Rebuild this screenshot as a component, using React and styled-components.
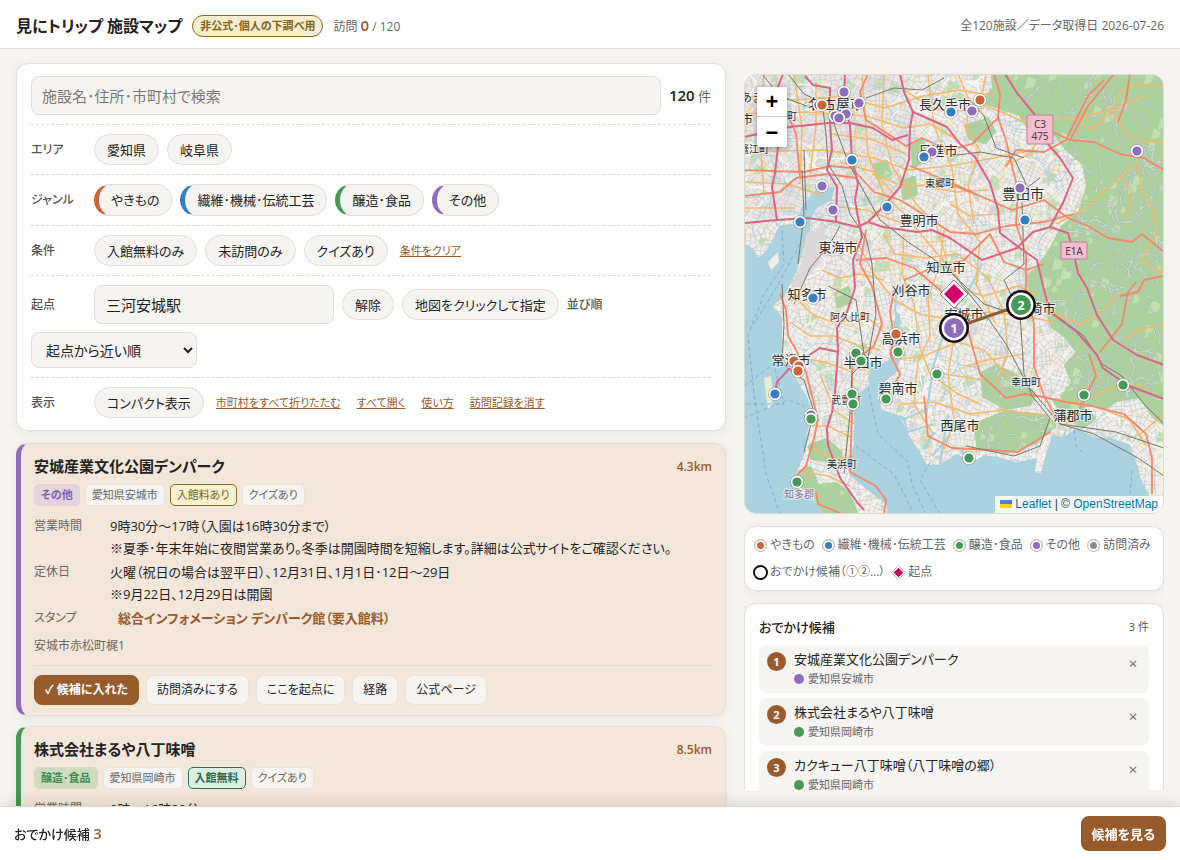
import React, { useState } from 'react';
import styled, { createGlobalStyle, css } from 'styled-components';

const COLORS = {
  pottery: '#c8633a',
  textile: '#3a7dc0',
  food: '#459856',
  other: '#8d6cbb',
  visited: '#8f8f86',
};

const GENRES = [
  { id: 'pottery', name: 'やきもの' },
  { id: 'textile', name: '繊維･機械･伝統工芸' },
  { id: 'food', name: '醸造･食品' },
  { id: 'other', name: 'その他' },
];

const FACILITIES = [
  {
    name: '安城産業文化公園デンパーク',
    genre: 'other',
    genreName: 'その他',
    city: '愛知県安城市',
    free: false,
    distance: '4.3km',
    hours: ['9時30分～17時（入園は16時30分まで）', '※夏季･年末年始に夜間営業あり。冬季は開園時間を短縮します。詳細は公式サイトをご確認ください。'],
    closed: ['火曜（祝日の場合は翌平日）、12月31日、1月1日･12日～29日', '※9月22日、12月29日は開園'],
    stamp: '総合インフォメーション デンパーク館（要入館料）',
    address: '安城市赤松町梶1',
  },
  {
    name: '株式会社まるや八丁味噌',
    genre: 'food',
    genreName: '醸造･食品',
    city: '愛知県岡崎市',
    free: true,
    distance: '8.5km',
    hours: ['9時～16時20分'],
    closed: ['年末年始'],
    stamp: '受付',
    address: '岡崎市八丁町52',
  },
];

const CANDIDATES = [
  { name: '安城産業文化公園デンパーク', city: '愛知県安城市', genre: 'other' },
  { name: '株式会社まるや八丁味噌', city: '愛知県岡崎市', genre: 'food' },
  { name: 'カクキュー八丁味噌（八丁味噌の郷）', city: '愛知県岡崎市', genre: 'food' },
];

/* ---------- map data ---------- */

const WATER = [
  'M0 170L8 174 14 184 22 178 36 152 52 150 60 130 72 116 90 113 87 126 72 134 66 146 66 156 60 172 52 198 48 206 40 222 28 232 34 238 38 246 37 272 41 286 48 296 52 306 62 322 68 338 66 348 62 360 61 378 51 401 54 418 66 422 73 430 78 440 0 440Z',
  'M145 440L142 429 124 416 106 401 105 388 110 371 111 344 107 326 120 316 126 311 124 304 130 294 146 286 149 262 152 240 156 240 153 262 156 284 152 298 140 308 133 324 138 336 156 344 166 364 183 391 196 391 213 380 226 389 240 382 253 383 273 389 293 384 290 398 297 400 303 378 309 361 321 364 333 354 349 364 366 364 386 371 392 390 396 404 404 420 409 440Z',
];

const FORESTS = [
  'M249 0L420 0 420 350 408 340 396 322 372 326 360 334 344 330 330 336 318 322 330 310 322 292 334 278 322 262 308 252 302 232 288 222 284 204 300 186 310 170 318 154 336 138 344 112 340 90 322 74 312 60 288 58 276 40 258 34 240 28 250 14Z',
  'M238 300L252 292 272 302 290 320 286 330 262 334 240 322Z',
  'M232 350L262 338 300 342 310 352 292 368 262 378 234 372Z',
  'M66 372L82 366 96 378 96 392 82 386 68 384Z',
  'M56 398L66 394 74 412 92 410 104 420 112 438 80 438 70 420 58 412Z',
  'M310 326L334 330 350 344 340 352 322 344Z',
  'M222 52L244 46 250 58 240 68 226 64Z',
  'M168 72L178 66 182 84 170 92Z',
  'M130 92L142 88 146 100 134 104Z',
  'M158 108L170 104 172 120 160 124Z',
  'M92 220L104 214 106 228 94 232Z',
  'M186 434L196 430 206 440 186 440Z',
];

const MOTORWAYS = [
  'M0 149L33 146 63 144 93 148 113 153 124 148 139 153 173 158 188 156 206 164 238 186 273 174 289 158 306 153 324 159 329 176 334 199 343 214 353 241 369 266 393 281 420 291',
  'M261 0L273 19 291 41 303 69 316 84 329 104 319 129 306 153',
  'M156 0L160 18 169 38 203 53 216 70 231 83 246 109 254 136 256 159 276 174 293 186 299 212 306 238 333 258 353 281 359 294 383 311 420 325',
  'M169 38L166 53 165 86 156 113 139 133 124 148',
  'M0 63L46 53 84 49 106 49 129 54 148 66 164 61',
  'M39 0L28 28 34 73 31 99 28 113 33 146',
  'M61 2L69 11 86 14 86 49 88 76 83 96 93 113 92 148',
  'M101 0L100 20 106 52 108 86 114 109 111 126 114 143 118 163 109 186 111 214 103 238 93 254 94 278 91 318 88 338 83 354 84 371 96 404 113 428 120 436',
  'M94 278L76 274 46 294 33 308 31 319',
];

const TRUNKS = [
  'M0 96L60 98 86 92 108 94 130 118 156 126 182 142 206 158 232 160 262 152 300 148 330 140',
  'M0 122L36 118 52 104 84 100 112 104',
  'M36 220L42 236 44 262 52 276 62 298 68 322 74 346 70 364 62 392 52 402',
  'M124 0L116 18 122 46 144 60 162 72 178 64 204 76 228 70 254 44 256 20 250 0',
  'M150 216L146 238 150 264 146 280 156 300 150 312',
  'M254 44L262 66 268 92 274 116 272 150 282 180 282 214 290 250 290 292 300 322 316 350',
  'M206 110L236 122 268 136 300 126 324 144 344 152 364 164 388 168 398 160 420 178',
  'M300 54L326 66 350 68 376 80 400 84 420 96',
  'M166 92L206 108 232 120',
  'M112 186L142 184 170 194 196 216 220 242 236 300 262 324 280 320 294 322 322 328 348 332 380 340 402 360 408 384 408 420',
  'M180 322L184 362 208 374 246 376 274 378 306 358',
  'M122 156L116 190 128 212 138 250 130 272 108 288 108 340 106 398',
  'M106 398L132 412 142 426 140 440',
  'M345 280L352 302 336 334M370 0L344 32 326 66',
  'M386 0L382 26 374 48M356 278L378 250 384 218 392 208',
  'M72 418L74 430 98 440M36 22L52 60 56 104',
  'M262 92L272 76 300 78 322 66 344 22 360 6',
  'M300 190L282 196 260 188 246 160 220 186 188 194 160 206',
  'M420 202L400 206 394 218 376 222',
];

const SECONDARIES = [
  'M0 22L50 26 100 22 140 34 180 22 216 16 250 22',
  'M0 40L60 38 122 42 160 54 186 50 214 66',
  'M0 78L80 76 130 84 164 96 206 92 250 84 290 76',
  'M20 0L16 60 20 120M50 0L58 54 56 110M72 8L72 52 66 100',
  'M118 0L124 80 140 120 162 142 190 176 216 206',
  'M140 0L138 50 148 92 172 130 192 150 204 190',
  'M184 0L190 52 208 94 214 140 236 168 232 210 252 250',
  'M214 0L226 28 222 54 236 76 224 112 230 150',
  'M242 0L236 30 262 40 280 48 330 44 368 36 378 16 394 10 420 12',
  'M368 36L386 64 410 68 420 70M393 88L366 112 342 134 312 150',
  'M393 88L398 116 410 138 412 160 398 186 420 200',
  'M378 100L388 122 382 146M280 48L296 62 286 80 260 92',
  'M334 44L348 56 368 36 400 22',
  'M112 166L130 200 150 226 176 240 206 246 244 238 280 242 310 248',
  'M140 160L150 180 182 184 214 180 244 204 260 238 264 280 252 310',
  'M160 160L158 200 170 230 176 274 186 300 214 320 236 330',
  'M200 156L196 190 184 224 186 262 174 288 170 330 188 358',
  'M150 286L180 282 214 268 240 276 262 300 290 308',
  'M54 226L70 242 90 248 124 244 140 258',
  'M46 248L66 262 90 262 116 272 136 276',
  'M56 284L80 288 104 296 126 294M76 300L90 336 110 350',
  'M68 352L84 352 108 364M70 374L86 384 106 384M60 398L84 402 106 412',
  'M210 264L204 300 210 346 200 376M156 330L190 328 226 340 260 336 304 342',
  'M306 238L336 250 354 240 378 218M382 264L400 254 420 252',
  'M322 330L350 322 372 312 400 312M352 332L386 346 402 372M420 340L394 362',
  'M160 16L186 32 206 38 240 34M128 100L154 110 180 112 212 118 244 116',
  'M338 440L350 430M78 196L96 204 116 200 140 206',
  'M0 108L44 110 80 122M0 134L50 134M88 60L130 66 162 80M96 88L130 98 150 120M86 132L122 136 160 150',
  'M214 214L240 222 274 212 296 222M206 130L226 142 250 140M222 292L244 286 280 280M200 300L240 306',
];

const RAILS = [
  'M44 0L60 20 78 28 82 60 84 90 98 112 106 140 122 164 128 190 132 240 124 284 108 300 106 340 100 400',
  'M90 50L104 88 118 114 136 146 164 168 206 196 238 236 262 270 284 312 316 350 372 358 420 374',
  'M204 196L240 230 276 242M278 128L280 190 260 206 276 240 280 300 288 322 306 344 296 372 270 382 222 372',
  'M206 82L236 78 270 84 282 110 272 122 296 104',
  'M18 0L36 22 68 34M58 96L60 140 54 190M62 136L60 76',
  'M310 240L340 262 358 290 378 302 400 330 420 350',
  'M38 210L40 250 38 290 60 306 70 338 60 378',
  'M96 152L86 170 66 194 50 230M84 212L112 226 120 280 132 290',
  'M122 24L150 14 178 16 200 4M226 26L240 42 252 74 280 84',
  'M316 350L350 360 394 384 420 402',
];

const FERRIES = [
  'M38 156L40 190 20 220 4 262 10 320 22 400 36 440',
  'M0 312L30 290 40 330 0 330',
  'M0 344L44 326 60 332M124 314L134 360 164 388 168 410 182 440',
  'M112 372L150 400 170 440M186 388L176 406 196 440M56 170L32 214 10 250',
  'M330 356L332 372 340 380M388 396L386 420',
];

const PLACES = [
  ['名古屋市', 92, 35, 14],
  ['長久手市', 201, 35, 13],
  ['日進市', 194, 81, 13],
  ['東郷町', 196, 113, 10],
  ['豊明市', 175, 151, 13],
  ['豊田市', 279, 125, 14],
  ['東海市', 94, 178, 13],
  ['知立市', 202, 198, 13],
  ['刈谷市', 167, 221, 13],
  ['安城市', 220, 245, 13],
  ['岡崎市', 292, 239, 13],
  ['知多市', 63, 225, 13],
  ['阿久比町', 106, 247, 10],
  ['高浜市', 157, 269, 13],
  ['常滑市', 47, 291, 13],
  ['半田市', 119, 293, 13],
  ['碧南市', 154, 319, 13],
  ['武豊町', 102, 330, 10],
  ['美浜町', 98, 394, 10],
  ['西尾市', 216, 356, 13],
  ['幸田町', 282, 312, 10],
  ['蒲郡市', 329, 346, 13],
  ['蟹江町', 10, 79, 10],
  ['あま市', 14, 28, 12],
  ['津島市', -9, 50, 12],
  ['大治町', 38, 46, 10],
];

const PINS = [
  ['other', 100, 18], ['other', 115, 29], ['other', 91, 42], ['other', 102, 40], ['other', 95, 44],
  ['other', 78, 112], ['other', 89, 136], ['other', 188, 78], ['other', 228, 37], ['other', 276, 114],
  ['other', 393, 77], ['other', 67, 341],
  ['textile', 75, 31], ['textile', 207, 38], ['textile', 108, 86], ['textile', 180, 83],
  ['textile', 143, 133], ['textile', 56, 148], ['textile', 281, 146], ['textile', 69, 224], ['textile', 31, 320],
  ['pottery', 78, 31], ['pottery', 236, 26], ['pottery', 152, 260], ['pottery', 50, 287],
  ['pottery', 55, 292], ['pottery', 54, 297],
  ['food', 112, 279], ['food', 117, 287], ['food', 154, 278], ['food', 193, 300], ['food', 142, 325],
  ['food', 108, 320], ['food', 109, 330], ['food', 67, 345], ['food', 53, 408], ['food', 225, 384],
  ['food', 340, 321], ['food', 379, 311],
];

// small seeded generator so that the side streets are the same on every render
const createRandom = seed => () => {
  seed = (seed * 16807) % 2147483647;
  return seed / 2147483647;
};

const buildStreets = () => {
  const rnd = createRandom(4211);
  let path = '';
  for (let y = 0; y < 440; y += 15) {
    for (let x = 0; x < 420; x += 15) {
      const angle = rnd() * 1.2 - 0.3;
      const c = Math.cos(angle);
      const s = Math.sin(angle);
      for (let k = -1; k <= 1; k++) {
        const o = k * 5 + rnd() * 3;
        const l = 5 + rnd() * 6;
        path += `M${(x - c * l - s * o).toFixed(1)} ${(y - s * l + c * o).toFixed(1)}L${(x + c * l - s * o).toFixed(1)} ${(y + s * l + c * o).toFixed(1)}`;
        path += `M${(x + s * l + c * o).toFixed(1)} ${(y - c * l + s * o).toFixed(1)}L${(x - s * l + c * o).toFixed(1)} ${(y + c * l + s * o).toFixed(1)}`;
      }
    }
  }
  return path;
};

const buildTrails = (count, seed, minX) => {
  const rnd = createRandom(seed);
  let path = '';
  for (let i = 0; i < count; i++) {
    let x = minX + rnd() * (430 - minX);
    let y = rnd() * 440;
    let angle = rnd() * 6.28;
    path += `M${x.toFixed(1)} ${y.toFixed(1)}`;
    for (let k = 0; k < 9; k++) {
      angle += (rnd() - 0.5) * 1.8;
      x += Math.cos(angle) * 5;
      y += Math.sin(angle) * 5;
      path += `L${x.toFixed(1)} ${y.toFixed(1)}`;
    }
  }
  return path;
};

const buildPatches = (count, seed) => {
  const rnd = createRandom(seed);
  return Array.from({ length: count }, () => {
    const x = rnd() * 420;
    const y = rnd() * 440;
    const r = 2 + rnd() * 5;
    return `M${x.toFixed(1)} ${(y - r).toFixed(1)}l${(r * 1.2).toFixed(1)} ${(r * 0.6).toFixed(1)} ${(-r * 0.3).toFixed(1)} ${r.toFixed(1)} ${(-r * 1.4).toFixed(1)} ${(r * 0.3).toFixed(1)}z`;
  }).join('');
};

const STREETS = buildStreets();
const TRAILS = buildTrails(210, 917, 235);
const STREAMS = buildTrails(150, 5531, 0);
const LANES = buildTrails(140, 3307, 0);
const BYWAYS = buildTrails(70, 8123, 0);
const PARKS = buildPatches(260, 77);
const FIELDS = buildPatches(320, 1290);
const BLOCKS = buildPatches(160, 641);

const MapDrawing = () => (
  <MapSvg viewBox="1 1 418 438" preserveAspectRatio="xMidYMid slice" role="img" aria-label="施設の地図">
    <defs>
      <clipPath id="woods">
        {FORESTS.map(d => <path key={d} d={d} />)}
      </clipPath>
    </defs>
    <rect width="420" height="440" fill="#f3f0e9" />
    <path d="M0 0H160L176 60 150 130 110 160 60 140 0 146Z" fill="#ebe7e3" />
    <path d={FIELDS} fill="#eaf0d0" />
    <path d={BLOCKS} fill="#e0dcda" />
    <path d={PARKS} fill="#c6e2b2" />
    <path d={STREETS} stroke="#c3c4ce" strokeWidth="0.6" fill="none" />
    <path d={LANES} stroke="#fdfdfd" strokeWidth="1.1" fill="none" />
    <path d={STREAMS} stroke="#9fcde0" strokeWidth="0.8" fill="none" />
    <path d={BYWAYS} stroke="#f6cf9c" strokeWidth="1" fill="none" />
    {FORESTS.map(d => <path key={d} d={d} fill="#add19e" stroke="#add19e" strokeLinejoin="round" strokeWidth="4" />)}
    <g clipPath="url(#woods)" fill="none">
      <path d={PARKS} fill="#c5e0b0" />
      <path d={TRAILS} stroke="#9fb3a8" strokeWidth="1.7" />
      <path d={TRAILS} stroke="#dbe5d8" strokeWidth="0.8" />
    </g>
    {WATER.map(d => <path key={d} d={d} fill="#aad3df" stroke="#9cc4d2" strokeWidth="0.5" />)}
    <path d="M62 160L78 152 84 170 74 190 56 212 46 214 58 188Z" fill="#dcd8d8" />
    <path d="M24 188L34 178 35 188 27 196Z" fill="#f2efe4" />
    <path d="M20 304L27 302 29 320 27 334 24 334 22 320Z" fill="#e9ecd0" />
    <path d="M153 216L151 236 157 250M238 190L226 214 206 240 190 290 182 340M190 358L180 376M204 340L196 390" stroke="#aad3df" strokeWidth="2.4" fill="none" />
    <path d="M142 338L160 344 164 362 176 380M158 346L182 336M164 358L190 350M188 382L206 362" stroke="#aad3df" strokeWidth="2" fill="none" />
    <g fill="none" stroke="#7b9fd0" strokeWidth="0.8" strokeDasharray="4 3">
      {FERRIES.map(d => <path key={d} d={d} />)}
    </g>
    <g fill="none" strokeLinejoin="round">
      {SECONDARIES.map(d => <path key={d} d={d} stroke="#f5b969" strokeWidth="1.5" />)}
      {TRUNKS.map(d => <path key={d} d={d} stroke="#f5876a" strokeWidth="1.8" />)}
      {RAILS.map(d => <path key={d} d={d} stroke="#77756f" strokeWidth="1" />)}
      {MOTORWAYS.map(d => <path key={d} d={d} stroke="#dc6484" strokeWidth="2" />)}
    </g>
    <rect x="283" y="41" width="26" height="29" rx="1" fill="#efc0cf" stroke="#c97b93" />
    <rect x="317" y="168" width="26" height="17" rx="1" fill="#efc0cf" stroke="#c97b93" />
    <ShieldText x="296" y="54">C3</ShieldText>
    <ShieldText x="296" y="66">475</ShieldText>
    <ShieldText x="330" y="181">E1A</ShieldText>
    {PLACES.map(([name, x, y, size]) => (
      <PlaceText key={name} x={x} y={y} fontSize={size}>{name}</PlaceText>
    ))}
    <PlaceText x="55" y="424" fontSize="10" $district>知多郡</PlaceText>
    <path d="M210 254L277 231" stroke="#8a5a3a" strokeWidth="3" />
    {PINS.map(([genre, x, y]) => (
      <g key={`${x}-${y}`}>
        <circle cx={x} cy={y} r="6.8" fill="#6f6a70" opacity="0.55" />
        <circle cx={x} cy={y} r="6.2" fill="#fff" />
        <circle cx={x} cy={y} r="4.6" fill={COLORS[genre]} />
      </g>
    ))}
    <path d="M210 206L224 220 210 234 196 220Z" fill="#fff" stroke="#8b8088" />
    <path d="M210 210L220 220 210 230 200 220Z" fill="#d6006c" />
    {[['1', 210, 254, COLORS.other], ['2', 277, 231, COLORS.food]].map(([n, x, y, fill]) => (
      <g key={n}>
        <circle cx={x} cy={y} r="15" fill="#111" />
        <circle cx={x} cy={y} r="12.4" fill="#fff" />
        <circle cx={x} cy={y} r="10" fill={fill} />
        <PinNumber x={x} y={y + 5}>{n}</PinNumber>
      </g>
    ))}
  </MapSvg>
);

const FacilityCard = ({ data, defaultPicked }) => {
  const [picked, setPicked] = useState(defaultPicked);

  return (
    <Facility $color={COLORS[data.genre]}>
      <FacilityHead>
        <FacilityName>{data.name}</FacilityName>
        <Distance>{data.distance}</Distance>
      </FacilityHead>
      <Tags>
        <Tag $genre={data.genre}>{data.genreName}</Tag>
        <Tag>{data.city}</Tag>
        <Tag $fee={data.free ? 'free' : 'paid'}>{data.free ? '入館無料' : '入館料あり'}</Tag>
        <Tag>クイズあり</Tag>
      </Tags>
      <Details>
        <dt>営業時間</dt>
        <dd>{data.hours.map(line => <div key={line}>{line}</div>)}</dd>
        <dt>定休日</dt>
        <dd>{data.closed.map(line => <div key={line}>{line}</div>)}</dd>
        <dt>スタンプ</dt>
        <Stamp>{data.stamp}</Stamp>
      </Details>
      <Address>{data.address}</Address>
      <Actions>
        <ActionButton type="button" $primary={picked} onClick={() => setPicked(!picked)}>
          {picked ? '✓ 候補に入れた' : '候補に入れる'}
        </ActionButton>
        <ActionButton type="button">訪問済みにする</ActionButton>
        <ActionButton type="button">ここを起点に</ActionButton>
        <ActionButton as="a" href="#route">経路</ActionButton>
        <ActionButton as="a" href="#official">公式ページ</ActionButton>
      </Actions>
    </Facility>
  );
};

const App = () => (
  <>
    <GlobalStyle />
    <Header>
      <Title>見にトリップ 施設マップ</Title>
      <Badge>非公式･個人の下調べ用</Badge>
      <Visits>訪問 <strong>0</strong> / 120</Visits>
      <Source>全120施設／データ取得日 2026-07-26</Source>
    </Header>

    <Layout>
      <main>
        <Filters>
          <SearchRow>
            <SearchInput type="search" aria-label="施設を検索" placeholder="施設名･住所･市町村で検索" />
            <Count><strong>120</strong> 件</Count>
          </SearchRow>
          <FilterRow>
            <RowLabel>エリア</RowLabel>
            <Pill type="button">愛知県</Pill>
            <Pill type="button">岐阜県</Pill>
          </FilterRow>
          <FilterRow>
            <RowLabel>ジャンル</RowLabel>
            {GENRES.map(({ id, name }) => (
              <Pill key={id} type="button" $color={COLORS[id]}>{name}</Pill>
            ))}
          </FilterRow>
          <FilterRow>
            <RowLabel>条件</RowLabel>
            <Pill type="button">入館無料のみ</Pill>
            <Pill type="button">未訪問のみ</Pill>
            <Pill type="button">クイズあり</Pill>
            <TextButton type="button">条件をクリア</TextButton>
          </FilterRow>
          <FilterRow>
            <RowLabel as="label" htmlFor="origin">起点</RowLabel>
            <OriginInput id="origin" type="text" defaultValue="三河安城駅" />
            <Pill type="button">解除</Pill>
            <Pill type="button">地図をクリックして指定</Pill>
            <RowLabel as="label" htmlFor="sort">並び順</RowLabel>
            <SortSelect id="sort" defaultValue="near">
              <option value="near">起点から近い順</option>
              <option value="city">市町村順</option>
            </SortSelect>
          </FilterRow>
          <FilterRow>
            <RowLabel>表示</RowLabel>
            <Pill type="button">コンパクト表示</Pill>
            <TextButton type="button">市町村をすべて折りたたむ</TextButton>
            <TextButton type="button">すべて開く</TextButton>
            <TextButton type="button">使い方</TextButton>
            <TextButton type="button">訪問記録を消す</TextButton>
          </FilterRow>
        </Filters>

        <FacilityList>
          {FACILITIES.map(data => <FacilityCard key={data.name} data={data} defaultPicked />)}
        </FacilityList>
      </main>

      <Side>
        <MapPanel>
          <MapDrawing />
          <ZoomControl>
            <ZoomButton type="button" aria-label="拡大">+</ZoomButton>
            <ZoomButton type="button" aria-label="縮小">−</ZoomButton>
          </ZoomControl>
          <Attribution>
            <svg width="12" height="8" viewBox="0 0 12 8" aria-hidden="true">
              <path fill="#4c7be1" d="M0 0h12v4H0z" />
              <path fill="#ffd500" d="M0 4h12v4H0z" />
            </svg>{' '}
            <a href="#leaflet">Leaflet</a> | © <a href="#osm">OpenStreetMap</a>
          </Attribution>
        </MapPanel>

        <Legend>
          {GENRES.map(({ id, name }) => (
            <li key={id}><LegendDot $color={COLORS[id]} />{name}</li>
          ))}
          <li><LegendDot $color={COLORS.visited} />訪問済み</li>
          <li><LegendRing />おでかけ候補（①②…）</li>
          <li>
            <svg width="15" height="15" viewBox="0 0 15 15" aria-hidden="true">
              <path d="M7.5 .5L14.5 7.5 7.5 14.5 .5 7.5Z" fill="#fff" stroke="#c9b8c2" />
              <path d="M7.5 2.7L12.3 7.5 7.5 12.3 2.7 7.5Z" fill="#d0006a" />
            </svg>
            起点
          </li>
        </Legend>

        <Plan>
          <PlanHead>
            <h2>おでかけ候補</h2>
            <span>3 件</span>
          </PlanHead>
          <PlanList>
            {CANDIDATES.map(({ name, city, genre }, i) => (
              <PlanItem key={name}>
                <PlanNumber>{i + 1}</PlanNumber>
                <PlanText>
                  <PlanName>{name}</PlanName>
                  <PlanCity $color={COLORS[genre]}>{city}</PlanCity>
                </PlanText>
                <RemoveButton type="button" aria-label={`${name}を外す`}>×</RemoveButton>
              </PlanItem>
            ))}
          </PlanList>
        </Plan>
      </Side>
    </Layout>

    <BottomBar>
      <div>おでかけ候補 <strong>3</strong></div>
      <ShowButton type="button">候補を見る</ShowButton>
    </BottomBar>
  </>
);

const GlobalStyle = createGlobalStyle`
  * {
    box-sizing: border-box;
  }

  html {
    scrollbar-width: none;
  }

  body {
    margin: 0;
    background: #f6f4f1;
    color: #222;
    font-family: 'Open Sans', 'Noto Sans CJK JP', sans-serif;
    font-size: 13px;
    line-height: 22px;
    font-feature-settings: 'palt';
  }

  button, input, select {
    font: inherit;
    color: inherit;
    font-feature-settings: inherit;
  }

  button {
    cursor: pointer;
  }
`;

const cardBox = css`
  background: #fff;
  border: 1px solid #e2ded8;
  border-radius: 12px;
  box-shadow: 0 2px 10px rgba(40, 30, 20, 0.08);
`;

const Header = styled.header`
  position: sticky;
  top: 0;
  z-index: 5;
  display: flex;
  align-items: center;
  gap: 10px;
  height: 49px;
  padding: 4px 16px 0;
  background: #fff;
  border-bottom: 1px solid #e2ded8;
`;

const Title = styled.h1`
  margin: 0;
  font-size: 16px;
  font-weight: 700;
`;

const Badge = styled.span`
  padding: 0 7px;
  border: 1px solid #8a6d1f;
  border-radius: 11px;
  background: #f7edcf;
  color: #80641a;
  font-size: 11px;
  font-weight: 700;
  line-height: 20px;
`;

const Visits = styled.span`
  color: #666;
  font-size: 12px;

  strong {
    color: #985b2b;
    font-size: 15px;
    font-weight: 600;
  }
`;

const Source = styled.span`
  margin-left: auto;
  color: #666;
  font-size: 12px;
`;

const Layout = styled.div`
  display: grid;
  grid-template-columns: minmax(0, 1fr) 420px;
  gap: 18px;
  padding: 14px 16px 80px;
`;

const Filters = styled.section`
  ${cardBox}
  padding: 12px 14px;
`;

const SearchRow = styled.div`
  display: flex;
  align-items: center;
  gap: 8px;
  padding-bottom: 9px;
`;

const field = css`
  border: 1px solid #e0dcd6;
  border-radius: 8px;
  background: #f6f4f1;
  font-size: 15px;
`;

const SearchInput = styled.input`
  ${field}
  flex: 1;
  min-width: 0;
  height: 39px;
  padding: 0 10px;

  &::placeholder {
    color: #777;
  }
`;

const Count = styled.div`
  color: #666;

  strong {
    color: #222;
    font-size: 15px;
    font-weight: 600;
  }
`;

const FilterRow = styled.div`
  display: flex;
  flex-wrap: wrap;
  align-items: center;
  gap: 8px;
  padding: 9px 0;
  border-top: 1px dashed #ddd8d4;

  &:last-child {
    padding-bottom: 0;
  }
`;

const RowLabel = styled.span`
  flex: 0 0 55px;
  color: #555;
  font-size: 12px;
  font-weight: 500;
`;

const Pill = styled.button`
  height: ${({ $color }) => ($color ? '32px' : '31px')};
  padding: 0 12px;
  border: 1px solid #e0dcd6;
  border-radius: 16px;
  background: #f6f4f1;
  ${({ $color }) => $color && css`border-left: 5px solid ${$color};`}
`;

const TextButton = styled.button`
  padding: 0 4px;
  border: 0;
  background: none;
  color: #985b2b;
  font-size: 11px;
  text-decoration: underline;
`;

const OriginInput = styled.input`
  ${field}
  width: 240px;
  height: 39px;
  padding: 0 11px;
`;

const SortSelect = styled.select`
  ${field}
  width: 166px;
  height: 36px;
  padding: 0 10px;
  font-size: 14px;
`;

const FacilityList = styled.div`
  display: flex;
  flex-direction: column;
  gap: 10px;
  margin-top: 12px;
`;

const Facility = styled.article`
  ${cardBox}
  padding: 10px 13px;
  border-left: 5px solid ${({ $color }) => $color};
  background: #f3e7dc;
`;

const FacilityHead = styled.div`
  display: flex;
  justify-content: space-between;
  align-items: center;
`;

const FacilityName = styled.h2`
  margin: 0;
  font-size: 15px;
  font-weight: 700;
  line-height: 24px;
`;

const Distance = styled.span`
  padding-top: 2px;
  color: #985b2b;
  font-size: 12px;
  font-weight: 600;
`;

const Tags = styled.div`
  display: flex;
  gap: 5px;
  margin: 6px 0 9px;
`;

const tagGenre = {
  other: css`background: #e3d3dc; border-color: #e3d3dc; color: #7f5fb0; font-weight: 700;`,
  food: css`background: #d0dac1; border-color: #d0dac1; color: #3d8b4d; font-weight: 700;`,
};

const tagFee = {
  paid: css`background: #f9efd1; border-color: #8a6d1f; color: #80641a;`,
  free: css`background: #dcefe3; border-color: #2f6f4f; color: #2b6a4a; font-weight: 700;`,
};

const Tag = styled.span`
  padding: 0 6px;
  border: 1px solid #e7e2dc;
  border-radius: 5px;
  background: #f6f4f1;
  color: #666;
  font-size: 11px;
  line-height: 20px;
  ${({ $genre }) => tagGenre[$genre]}
  ${({ $fee }) => tagFee[$fee]}
`;

const Details = styled.dl`
  display: grid;
  grid-template-columns: 68px minmax(0, 1fr);
  gap: 2px 8px;
  margin: 0;

  dt {
    color: #6a6661;
    font-size: 12px;
  }

  dd {
    margin: 0;
  }
`;

const Stamp = styled.dd`
  && {
    padding-left: 8px;
  }
  color: #985b2b;
  font-weight: 700;
`;

const Address = styled.div`
  margin-top: 7px;
  color: #6a6661;
  font-size: 12px;
  line-height: 20px;
`;

const Actions = styled.div`
  display: flex;
  gap: 7px;
  margin-top: 9px;
  padding-top: 9px;
  border-top: 1px solid #e4dad0;
`;

const ActionButton = styled.button`
  height: 30px;
  padding: 0 10px;
  border: 1px solid #e7e2dc;
  border-radius: 8px;
  background: #f6f4f1;
  color: #222;
  font-size: 12px;
  line-height: 28px;
  text-decoration: none;
  ${({ $primary }) => $primary && css`
    border-color: #985b2b;
    background: #985b2b;
    color: #fff;
    font-weight: 700;
  `}
`;

const Side = styled.aside`
  position: sticky;
  top: 74px;
  align-self: start;
  display: flex;
  flex-direction: column;
  gap: 12px;
  max-height: calc(100vh - 144px);
  overflow-y: auto;
  scrollbar-width: none;

  > * {
    flex: none;
  }
`;

const MapPanel = styled.section`
  position: relative;
  height: 440px;
  overflow: hidden;
  border: 1px solid #ddd9d3;
  border-radius: 12px;
`;

const MapSvg = styled.svg`
  display: block;
  width: 100%;
  height: 100%;
`;

const PlaceText = styled.text`
  fill: ${({ $district }) => ($district ? '#8a7198' : '#2c2c2c')};
  stroke: rgba(255, 255, 255, 0.65);
  stroke-width: 2px;
  paint-order: stroke;
  text-anchor: middle;
  font-family: 'Noto Sans CJK JP', sans-serif;
  font-feature-settings: normal;
`;

const ShieldText = styled.text`
  fill: #5d2f3f;
  font-family: 'Noto Sans', sans-serif;
  font-size: 10px;
  text-anchor: middle;
`;

const PinNumber = styled.text`
  fill: #fff;
  font-size: 13px;
  font-weight: 700;
  text-anchor: middle;
`;

const ZoomControl = styled.div`
  position: absolute;
  top: 12px;
  left: 12px;
  display: flex;
  flex-direction: column;
  overflow: hidden;
  border-radius: 2px;
  box-shadow: 0 1px 5px rgba(0, 0, 0, 0.4);
`;

const ZoomButton = styled.button`
  width: 30px;
  height: 30px;
  padding: 0;
  border: 0;
  border-bottom: 1px solid #ccc;
  background: #fff;
  color: #000;
  font-family: 'Liberation Sans', Arial, sans-serif;
  font-size: 22px;
  font-weight: 700;
  line-height: 29px;

  &:last-child {
    border-bottom: 0;
  }
`;

const Attribution = styled.div`
  position: absolute;
  right: 0;
  bottom: 0;
  padding: 0 5px;
  background: rgba(255, 255, 255, 0.85);
  color: #333;
  font-family: 'Liberation Sans', Arial, sans-serif;
  font-size: 12px;
  line-height: 17px;

  a {
    color: #0078a8;
    text-decoration: none;
  }
`;

const Legend = styled.ul`
  ${cardBox}
  display: flex;
  flex-wrap: wrap;
  gap: 5px 6px;
  margin: 0;
  padding: 7px 8px;
  color: #666;
  font-size: 12px;
  list-style: none;

  li {
    display: flex;
    align-items: center;
    gap: 2px;
  }
`;

const LegendDot = styled.i`
  width: 13px;
  height: 13px;
  margin: 0 1px;
  border: 1px solid #c4c0bc;
  border-radius: 50%;
  background: ${({ $color }) => $color};
  box-shadow: inset 0 0 0 2px #fff;
`;

const LegendRing = styled.i`
  width: 15px;
  height: 15px;
  border: 2px solid #111;
  border-radius: 50%;
`;

const Plan = styled.section`
  ${cardBox}
  padding: 12px 14px;
`;

const PlanHead = styled.div`
  display: flex;
  justify-content: space-between;
  align-items: center;
  margin-bottom: 7px;

  h2 {
    margin: 0;
    font-size: 13px;
    font-weight: 500;
  }

  span {
    color: #555;
    font-size: 11px;
  }
`;

const PlanList = styled.ol`
  display: flex;
  flex-direction: column;
  gap: 5px;
  margin: 0;
  padding: 0;
  list-style: none;
`;

const PlanItem = styled.li`
  display: flex;
  gap: 8px;
  padding: 4px 8px;
  border-radius: 8px;
  background: #f6f4f1;
`;

const PlanNumber = styled.span`
  width: 19px;
  height: 19px;
  margin-top: 3px;
  border-radius: 50%;
  background: #985b2b;
  color: #fff;
  font-size: 11px;
  font-weight: 700;
  line-height: 19px;
  text-align: center;
`;

const PlanText = styled.div`
  flex: 1;
  line-height: 20px;
`;

const PlanName = styled.div`
  font-size: 13px;
`;

const PlanCity = styled.div`
  display: flex;
  align-items: center;
  gap: 4px;
  color: #666;
  font-size: 11px;

  &::before {
    content: '';
    width: 10px;
    height: 10px;
    border-radius: 50%;
    background: ${({ $color }) => $color};
  }
`;

const RemoveButton = styled.button`
  width: 16px;
  height: 24px;
  margin-top: 2px;
  padding: 0;
  border: 0;
  background: none;
  color: #666;
  font-size: 15px;
`;

const BottomBar = styled.footer`
  position: fixed;
  right: 0;
  bottom: 0;
  left: 0;
  z-index: 6;
  display: flex;
  justify-content: space-between;
  align-items: center;
  height: 54px;
  padding: 0 14px;
  border-top: 1px solid #dedad4;
  background: #fff;
  box-shadow: 0 -3px 14px rgba(40, 30, 20, 0.12);
  font-weight: 500;

  strong {
    color: #985b2b;
    font-size: 15px;
    font-weight: 600;
  }
`;

const ShowButton = styled.button`
  height: 35px;
  padding: 0 11px;
  border: 0;
  border-radius: 8px;
  background: #985b2b;
  color: #fff;
  font-weight: 700;
`;

export default App;
